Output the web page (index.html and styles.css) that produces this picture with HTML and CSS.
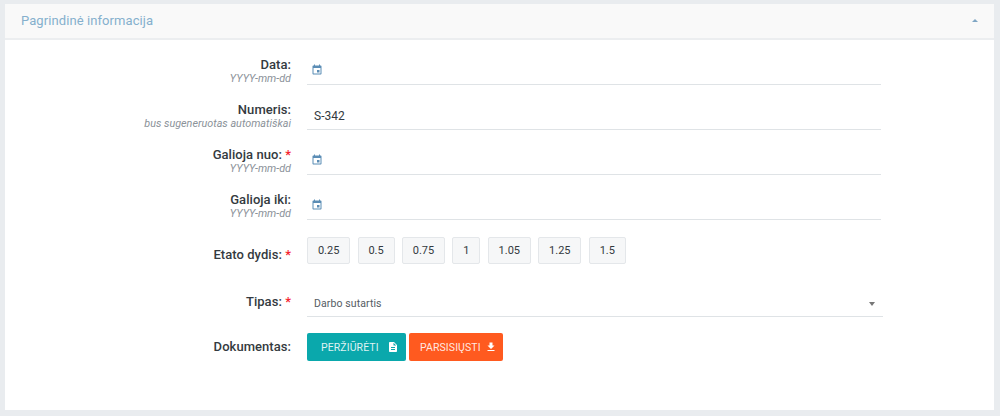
FILE: index.html
```html
<!DOCTYPE html>
<html lang="lt">
<head>
<meta charset="utf-8">
<title>Pagrindinė informacija</title>
<link rel="stylesheet" href="styles.css">
</head>
<body>
<section class="card">
  <header class="card-head">
    <h2 class="card-title">Pagrindinė informacija</h2>
    <span class="collapse-arrow"></span>
  </header>
  <form class="form">
    <div class="row">
      <div class="label"><div class="name">Data:</div><div class="hint">YYYY-mm-dd</div></div>
      <div class="field"><svg class="cal" viewBox="0 0 24 24"><path d="M17 12h-5v5h5v-5zM16 1v2H8V1H6v2H5c-1.1 0-2 .9-2 2v14c0 1.1.9 2 2 2h14c1.1 0 2-.9 2-2V5c0-1.1-.9-2-2-2h-1V1h-2zm3 18H5V8h14v11z"/></svg></div>
    </div>
    <div class="row">
      <div class="label"><div class="name">Numeris:</div><div class="hint">bus sugeneruotas automatiškai</div></div>
      <div class="field"><span class="value">S-342</span></div>
    </div>
    <div class="row">
      <div class="label"><div class="name">Galioja nuo: <span class="req">*</span></div><div class="hint">YYYY-mm-dd</div></div>
      <div class="field"><svg class="cal" viewBox="0 0 24 24"><path d="M17 12h-5v5h5v-5zM16 1v2H8V1H6v2H5c-1.1 0-2 .9-2 2v14c0 1.1.9 2 2 2h14c1.1 0 2-.9 2-2V5c0-1.1-.9-2-2-2h-1V1h-2zm3 18H5V8h14v11z"/></svg></div>
    </div>
    <div class="row">
      <div class="label"><div class="name">Galioja iki:</div><div class="hint">YYYY-mm-dd</div></div>
      <div class="field"><svg class="cal" viewBox="0 0 24 24"><path d="M17 12h-5v5h5v-5zM16 1v2H8V1H6v2H5c-1.1 0-2 .9-2 2v14c0 1.1.9 2 2 2h14c1.1 0 2-.9 2-2V5c0-1.1-.9-2-2-2h-1V1h-2zm3 18H5V8h14v11z"/></svg></div>
    </div>
    <div class="row row-chips">
      <div class="label"><div class="name">Etato dydis: <span class="req">*</span></div></div>
      <div class="chips">
        <span class="chip">0.25</span><span class="chip">0.5</span><span class="chip">0.75</span><span class="chip">1</span><span class="chip">1.05</span><span class="chip">1.25</span><span class="chip">1.5</span>
      </div>
    </div>
    <div class="row row-select">
      <div class="label"><div class="name">Tipas: <span class="req">*</span></div></div>
      <div class="field select"><span class="select-value">Darbo sutartis</span><span class="select-arrow"></span></div>
    </div>
    <div class="row row-doc">
      <div class="label"><div class="name">Dokumentas:</div></div>
      <div class="actions">
        <button type="button" class="btn btn-teal">PERŽIŪRĖTI <svg class="btn-ico" viewBox="0 0 24 24"><path d="M14 2H6c-1.1 0-2 .9-2 2v16c0 1.1.9 2 2 2h12c1.1 0 2-.9 2-2V8l-6-6zm2 16H8v-2h8v2zm0-4H8v-2h8v2zm-3-5V3.5L18.5 9H13z"/></svg></button>
        <button type="button" class="btn btn-orange">PARSISIŲSTI <svg class="btn-ico" viewBox="0 0 24 24"><path d="M19 9h-4V3H9v6H5l7 7 7-7zM5 18v2h14v-2H5z"/></svg></button>
      </div>
    </div>
  </form>
</section>
</body>
</html>
```
FILE: styles.css
```css
* { box-sizing: border-box; }
html, body { height: 100%; }
body {
  margin: 0;
  padding: 4px 6px 6px 5px;
  background: #e9ecef;
  font-family: Roboto, "Liberation Sans", sans-serif;
  color: #343a40;
  overflow: hidden;
}
.card {
  height: 406px;
  background: #fff;
}
.card-head {
  height: 36px;
  display: flex;
  align-items: center;
  justify-content: space-between;
  padding: 0 16px 2px;
  background: #f9f9f9;
  border-bottom: 2px solid #eceef0;
}
.card-title {
  margin: 0;
  font-size: 13px;
  font-weight: 400;
  color: #85b0cd;
  letter-spacing: 0.08px;
}
.collapse-arrow {
  width: 0;
  height: 0;
  border-left: 3px solid transparent;
  border-right: 3px solid transparent;
  border-bottom: 3px solid #7fa6c4;
}
.form { padding-top: 9px; }
.row {
  display: flex;
  gap: 16px;
  height: 45px;
}
.label {
  width: 286px;
  text-align: right;
  padding-top: 8px;
}
.name {
  font-size: 13px;
  line-height: 16px;
  font-weight: 500;
  letter-spacing: 0.05px;
  color: #343a40;
}
.req { color: #f5222d; }
.hint {
  margin-top: -1px;
  font-size: 10.8px;
  line-height: 13px;
  font-style: italic;
  color: #8b9299;
}
.field {
  width: 574px;
  height: 36px;
  display: flex;
  align-items: center;
  border-bottom: 1px solid #dfe3e6;
}
.cal {
  width: 12px;
  height: 12px;
  margin: 6px 0 0 4px;
  fill: #5b8db5;
}
.value {
  margin: 9px 0 0 7px;
  font-size: 12px;
  color: #343a40;
}
.row-chips { height: 61px; padding-top: 8px; }
.row-chips .label { padding-top: 10px; }
.chips { display: flex; gap: 7.3px; align-items: flex-start; }
.chip {
  height: 27px;
  padding: 0 9.9px;
  display: flex;
  align-items: center;
  background: #f6f7f8;
  border: 1px solid #e4e7ea;
  border-radius: 2px;
  font-size: 11px;
  color: #343a40;
}
.row-select { height: 43px; }
.row-select .label { margin-top: -3px; height: 30px; padding-top: 7px; }
.select {
  width: 576px;
  height: 27px;
  justify-content: space-between;
  padding: 1px 8px 0 7px;
}
.select-value { font-size: 10.5px; color: #555c63; letter-spacing: .1px; }
.select-arrow {
  width: 0;
  height: 0;
  border-left: 3.5px solid transparent;
  border-right: 3.5px solid transparent;
  border-top: 4px solid #777;
}
.row-doc { height: auto; }
.row-doc .label { padding-top: 0; margin-top: 6px; }
.actions { display: flex; gap: 3px; }
.btn {
  height: 28px;
  padding: 0;
  display: flex;
  align-items: center;
  border: 0;
  border-radius: 2px;
  color: rgba(255,255,255,.88);
  font-family: inherit;
  font-size: 10.5px;
  letter-spacing: 0.1px;
}
.btn-teal { width: 99px; padding-left: 14px; gap: 8px; background: #0aa8ac; }
.btn-orange { width: 94px; padding-left: 11px; gap: 4px; background: #ff5a1f; }
.btn-ico { width: 12px; height: 12px; fill: #fff; }
```
